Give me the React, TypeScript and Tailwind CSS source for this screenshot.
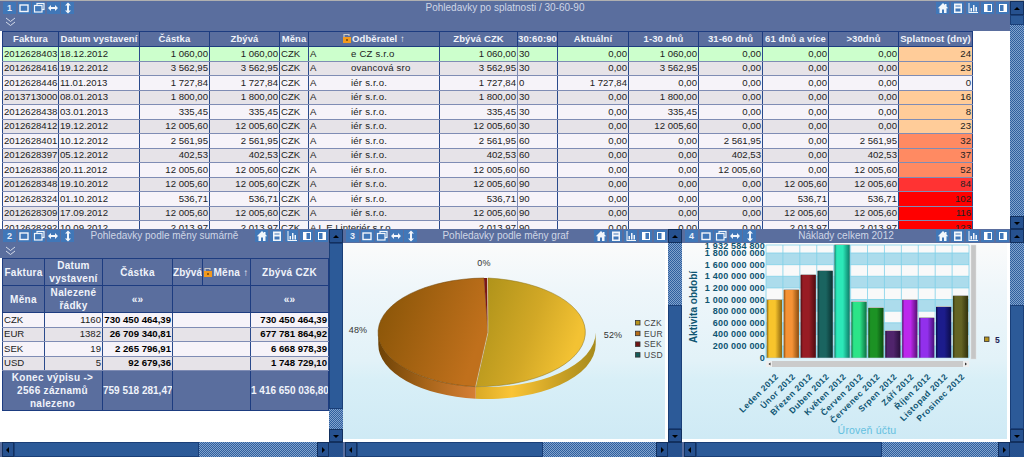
import React from "react";

const SANS = "font-['Liberation_Sans',Arial,sans-serif]";

function Glyph({ k }: { k: string }) {
  const s = "#f2f6fb";
  const b = "#4077b8";
  switch (k) {
    case "win":
      return <rect x="2" y="3" width="8" height="6.5" fill={b} stroke={s} strokeWidth="1.4" />;
    case "dbl":
      return (
        <g stroke={s} strokeWidth="1.2" fill={b}>
          <rect x="4" y="1.5" width="7" height="6" />
          <rect x="1.5" y="3.5" width="7.5" height="6.5" />
        </g>
      );
    case "lr":
      return <path d="M1 6l3-3v2h4V3l3 3-3 3V7H4v2z" fill={s} />;
    case "ud":
      return <path d="M6 .5l3 3H7v5h2l-3 3-3-3h2v-5H3z" fill={s} />;
    case "home":
      return <path d="M6 1L.8 6.2h1.7V11H5V7.6h2V11h2.5V6.2h1.7L9.5 4.5V2H8v1z" fill={s} />;
    case "save":
      return (
        <g fill={s}>
          <path d="M2 1.5h8v9.5H2z" />
          <path d="M3.5 3.5h5v1h-5zM3.5 6.5h5v3h-5z" fill={b} />
        </g>
      );
    case "chart":
      return <path d="M1.5 1v10h9.5v-1H2.5V1zM3.5 6h1.5v3.5H3.5zM6 3h1.5v6.5H6zM8.5 5H10v4.5H8.5z" fill={s} />;
    case "boxl":
      return (
        <g>
          <rect x="2" y="2" width="8" height="8" fill="#fff" />
          <rect x="5.5" y="3" width="3.5" height="6" fill={b} />
        </g>
      );
    case "boxr":
      return (
        <g>
          <rect x="2" y="2" width="8" height="8" fill="#fff" />
          <rect x="3" y="3" width="3.5" height="6" fill={b} />
        </g>
      );
    default:
      return null;
  }
}

function Tile({ k }: { k: string }) {
  return (
    <div className="w-[13px] h-[12px] bg-[#4077b8] flex items-center justify-center shrink-0">
      {k.length === 1 ? (
        <span className={`${SANS} text-[9px] leading-none font-bold text-[#e8eef8]`}>{k}</span>
      ) : (
        <svg width="12" height="12" viewBox="0 0 12 12">
          <Glyph k={k} />
        </svg>
      )}
    </div>
  );
}

function TitleBar({ n, title }: { n: string; title: string }) {
  return (
    <div className="h-[14px] flex items-center pl-[3px] pr-[1px] shrink-0">
      <div className="flex gap-[1.5px]">
        {[n, "win", "dbl", "lr", "ud"].map((k) => (
          <Tile key={k} k={k} />
        ))}
      </div>
      <div className={`${SANS} flex-1 text-center text-[10px] leading-none text-[#cfd6e6] whitespace-nowrap`}>{title}</div>
      <div className="flex gap-[2px]">
        {["home", "save", "chart", "boxl", "boxr"].map((k) => (
          <Tile key={k} k={k} />
        ))}
      </div>
    </div>
  );
}

function Chevrons() {
  return (
    <div className="h-[15px] flex items-center pl-[5px] shrink-0">
      <svg width="11" height="10" viewBox="0 0 11 10" fill="none" stroke="#d5dcea" strokeWidth="1">
        <path d="M1 1l4.5 3.5L10 1M1 5l4.5 3.5L10 5" />
      </svg>
    </div>
  );
}

const DITHER = "bg-[repeating-conic-gradient(#2f5f9e_0_25%,#82a2cc_0_50%)] bg-[length:2px_2px]";

function ArrowBtn({ dir, className }: { dir: "u" | "d" | "l" | "r"; className: string }) {
  const p = { u: "M2 7l3-3 3 3z", d: "M2 4l3 3 3-3z", l: "M6 2L3 5l3 3z", r: "M4 2l3 3-3 3z" }[dir];
  return (
    <div className={`bg-[#26518f] border border-[#12305f] flex items-center justify-center shrink-0 ${className}`}>
      <svg width="10" height="10" viewBox="0 0 10 10">
        <path d={p} fill="#000" />
      </svg>
    </div>
  );
}

function VScroll({ before, thumb }: { before: number; thumb: number }) {
  return (
    <div className="w-[14px] shrink-0 flex flex-col self-stretch">
      <ArrowBtn dir="u" className="h-[14px] w-[14px]" />
      <div className={`flex-1 flex flex-col ${DITHER}`}>
        <div className="shrink-0" style={{ height: before }} />
        <div className="bg-[#2c5a98] border border-[#1a3f78] shrink-0" style={{ height: thumb }} />
      </div>
      <ArrowBtn dir="d" className="h-[13px] w-[14px]" />
    </div>
  );
}

function HScroll({ thumb }: { thumb: number }) {
  return (
    <div className="h-[15px] shrink-0 flex bg-[#5a6e9e] pl-[2px]">
      <ArrowBtn dir="l" className="w-[12px] h-[15px]" />
      <div className={`flex-1 flex ${DITHER}`}>
        <div className="bg-[#2c5a98] border border-[#1a3f78] shrink-0" style={{ width: thumb }} />
      </div>
      <ArrowBtn dir="r" className="w-[12px] h-[15px]" />
    </div>
  );
}

function Lock() {
  return (
    <svg width="8" height="10" viewBox="0 0 8 10" className="inline-block align-[-1px] mr-[1px]">
      <path d="M1 4V1.5h5V3" fill="none" stroke="#c9c9c9" strokeWidth="1.2" />
      <rect x="0" y="4" width="8" height="6" fill="#f39a1e" />
      <rect x="3.2" y="6" width="1.6" height="2" fill="#7a4a08" />
    </svg>
  );
}

const topCols = [56, 81, 70, 70, 29, 131, 78, 40, 71, 70, 64, 66, 70, 74];
const topHead = ["Faktura", "Datum vystavení", "Částka", "Zbývá", "Měna", "Odběratel ↑", "Zbývá CZK", "30:60:90", "Aktuální", "1-30 dnů", "31-60 dnů", "61 dnů a více", ">30dnů", "Splatnost (dny)"];

type R = [string, string, string, string, string, string, string, string, string, string, number, string];
const Z = "0,00";
const rows: R[] = [
  ["2012628403", "18.12.2012", "1 060,00", "e CZ s.r.o", "30", Z, "1 060,00", Z, Z, Z, 24, "bg-[#ffcc99]"],
  ["2012628416", "19.12.2012", "3 562,95", "ovancová sro", "30", Z, "3 562,95", Z, Z, Z, 23, "bg-[#ffcc99]"],
  ["2012628446", "11.01.2013", "1 727,84", "iér s.r.o.", "0", "1 727,84", Z, Z, Z, Z, 0, ""],
  ["2013713000", "08.01.2013", "1 800,00", "iér s.r.o.", "30", Z, "1 800,00", Z, Z, Z, 16, "bg-[#ffcc99]"],
  ["2012628438", "03.01.2013", "335,45", "iér s.r.o.", "30", Z, "335,45", Z, Z, Z, 8, "bg-[#ffcc99]"],
  ["2012628412", "19.12.2012", "12 005,60", "iér s.r.o.", "30", Z, "12 005,60", Z, Z, Z, 23, "bg-[#ffcc99]"],
  ["2012628401", "10.12.2012", "2 561,95", "iér s.r.o.", "60", Z, Z, "2 561,95", Z, "2 561,95", 32, "bg-[#ff8a62]"],
  ["2012628397", "05.12.2012", "402,53", "iér s.r.o.", "60", Z, Z, "402,53", Z, "402,53", 37, "bg-[#ff8a62]"],
  ["2012628386", "20.11.2012", "12 005,60", "iér s.r.o.", "60", Z, Z, "12 005,60", Z, "12 005,60", 52, "bg-[#ff8a62]"],
  ["2012628348", "19.10.2012", "12 005,60", "iér s.r.o.", "90", Z, Z, Z, "12 005,60", "12 005,60", 84, "bg-[#ff3333]"],
  ["2012628324", "01.10.2012", "536,71", "iér s.r.o.", "90", Z, Z, Z, "536,71", "536,71", 102, "bg-[#ff0000]"],
  ["2012628309", "17.09.2012", "12 005,60", "iér s.r.o.", "90", Z, Z, Z, "12 005,60", "12 005,60", 116, "bg-[#ff0000]"],
  ["2012628292", "10.09.2012", "2 013,97", "", "90", Z, Z, "0,00", "2 013,97", "2 013,97", 123, "bg-[#ff0000]"],
];

const TD = "border border-[#2a4a8c] border-y-[#7f8cb4] px-[1px] p-0 text-[9.6px] leading-[12px] text-[#222] whitespace-nowrap overflow-hidden";
const TH = "border border-[#1d3c80] px-0 p-0 text-[9.5px] font-bold tracking-[0.1px] leading-[12px] text-[#f0f3fa] bg-[#5a6e9e] text-center whitespace-nowrap overflow-hidden";

function TopTable() {
  return (
    <table className={`${SANS} table-fixed border-collapse w-[970px]`}>
      <colgroup>
        {topCols.map((w, i) => (
          <col key={i} style={{ width: w }} />
        ))}
      </colgroup>
      <thead>
        <tr className="h-[15px]">
          {topHead.map((h, i) => (
            <th key={i} className={TH}>
              {i === 5 && <Lock />}
              {h}
            </th>
          ))}
        </tr>
      </thead>
      <tbody>
        {rows.map((r, i) => {
          const bg = i === 0 ? "bg-[#ccffcc]" : i % 2 === 1 ? "bg-[#e6e3e8]" : "bg-[#f6f3f9]";
          return (
            <tr key={i} className={`h-[14.5px] ${bg}`}>
              <td className={TD}>{r[0]}</td>
              <td className={TD}>{r[1]}</td>
              <td className={`${TD} text-right`}>{r[2]}</td>
              <td className={`${TD} text-right`}>{r[2]}</td>
              <td className={TD}>CZK</td>
              <td className={TD}>
                {r[3] ? (
                  <div className="flex">
                    <span className="w-[41px]">A</span>
                    <span className="tracking-[0.2px]">{r[3]}</span>
                  </div>
                ) : (
                  "A L E I interiér s.r.o."
                )}
              </td>
              <td className={`${TD} text-right border-x-[#7f8cb4]`}>{r[2]}</td>
              <td className={TD}>{r[4]}</td>
              {[5, 6, 7, 8, 9].map((k) => (
                <td key={k} className={`${TD} text-right`}>
                  {r[k] as string}
                </td>
              ))}
              <td className={`${TD} text-right ${r[11]}`}>{r[10]}</td>
            </tr>
          );
        })}
      </tbody>
    </table>
  );
}

const curRows = [
  ["CZK", "1160", "730 450 464,39", "730 450 464,39"],
  ["EUR", "1382", "26 709 340,81", "677 781 864,92"],
  ["SEK", "19", "2 265 796,91", "6 668 978,39"],
  ["USD", "5", "92 679,36", "1 748 729,10"],
];

function CurTable() {
  const th = "border border-[#1d3c80] p-0 text-[10px] font-bold tracking-[0.3px] leading-[13px] text-[#f0f3fa] bg-[#5a6e9e] text-center overflow-hidden";
  const td = "border border-[#2a4a8c] border-y-[#7f8cb4] px-[1px] p-0 text-[9.6px] leading-[12px] text-[#222] whitespace-nowrap overflow-hidden";
  return (
    <table className={`${SANS} table-fixed border-collapse w-[326px]`}>
      <colgroup>
        {[42, 58, 70, 30, 48, 78].map((w, i) => (
          <col key={i} style={{ width: w }} />
        ))}
      </colgroup>
      <tbody>
        <tr className="h-[27px]">
          <th className={th}>Faktura</th>
          <th className={th}>
            Datum
            <br />
            vystavení
          </th>
          <th className={th}>Částka</th>
          <th className={`${th} tracking-normal`}>Zbývá</th>
          <th className={`${th} whitespace-nowrap tracking-[0.2px]`}>
            <Lock />
            Měna ↑
          </th>
          <th className={th}>Zbývá CZK</th>
        </tr>
        <tr className="h-[27px]">
          <th className={th}>Měna</th>
          <th className={th}>
            Nalezené
            <br />
            řádky
          </th>
          <th className={th}>«»</th>
          <th className={th} colSpan={2} />
          <th className={th}>«»</th>
        </tr>
        {curRows.map((r, i) => (
          <tr key={r[0]} className={`h-[14.5px] ${i % 2 ? "bg-[#e6e3e8]" : "bg-[#f6f3f9]"}`}>
            <td className={td}>{r[0]}</td>
            <td className={`${td} text-right`}>{r[1]}</td>
            <td className={`${td} text-right font-bold text-black`}>{r[2]}</td>
            <td className={td} colSpan={2} />
            <td className={`${td} text-right font-bold text-black`}>{r[3]}</td>
          </tr>
        ))}
        <tr className="h-[38px]">
          <th className={th} colSpan={2}>
            Konec výpisu -&gt;
            <br />
            2566 záznamů
            <br />
            nalezeno
          </th>
          <th className={`${th} text-[9.6px] tracking-normal whitespace-nowrap text-right pr-[1px]`}>759 518 281,47</th>
          <th className={th} colSpan={2} />
          <th className={`${th} text-[9.6px] tracking-normal whitespace-nowrap text-right pr-[1px]`}>1 416 650 036,80</th>
        </tr>
      </tbody>
    </table>
  );
}

const CHART_BG = "bg-[linear-gradient(to_bottom,#fbfbfb_0%,#eef6fa_25%,#e2f2f8_60%,#d8eff7_70%,#cfeaf5_100%)]";

function PieChart() {
  const t = "font-['Liberation_Sans',Arial,sans-serif]";
  return (
    <svg width="324" height="196" viewBox="0 0 324 196" className={t}>
      <defs>
        <linearGradient id="czk" x1="0" y1="0" x2="1" y2="0.35">
          <stop offset="0" stopColor="#a98f18" />
          <stop offset="0.6" stopColor="#d2a826" />
          <stop offset="1" stopColor="#f3c233" />
        </linearGradient>
        <linearGradient id="eur" x1="0" y1="0" x2="1" y2="0.35">
          <stop offset="0" stopColor="#855306" />
          <stop offset="1" stopColor="#c0701c" />
        </linearGradient>
        <linearGradient id="czkS" gradientUnits="userSpaceOnUse" x1="132" y1="0" x2="254" y2="0">
          <stop offset="0" stopColor="#d9a925" />
          <stop offset="0.3" stopColor="#fac436" />
          <stop offset="0.7" stopColor="#c9a024" />
          <stop offset="1" stopColor="#a68a1c" />
        </linearGradient>
        <linearGradient id="eurS" gradientUnits="userSpaceOnUse" x1="35" y1="0" x2="133" y2="0">
          <stop offset="0" stopColor="#6d4206" />
          <stop offset="0.5" stopColor="#a8651a" />
          <stop offset="1" stopColor="#d67f36" />
        </linearGradient>
      </defs>
      <path d="M252.7 89.5A108.7 54.5 0 0 1 132.7 143.7v12A108.7 54.5 0 0 0 252.7 101.5z" fill="url(#czkS)" />
      <path d="M132.7 143.7A108.7 54.5 0 0 1 35.3 89.5v12A108.7 54.5 0 0 0 132.7 155.7z" fill="url(#eurS)" />
      <path d="M145 35A108.7 54.5 0 0 1 132.7 143.7L145 89.5z" fill="url(#czk)" stroke="#8a7014" strokeWidth="0.5" />
      <path d="M132.7 143.7A108.7 54.5 0 0 1 141 35L145 89.5z" fill="url(#eur)" stroke="#6d4206" strokeWidth="0.5" />
      <path d="M141 35h3.5L145 89.5z" fill="#7a1616" />
      <path d="M132.7 143.7L145 89.5 144.5 35" fill="none" stroke="#eee8c8" strokeWidth="0.7" />
      <g fontSize="9" fill="#333" textAnchor="middle" letterSpacing="0.2">
        <text x="141" y="23">0%</text>
        <text x="15" y="90">48%</text>
        <text x="270" y="95">52%</text>
      </g>
      {[
        ["CZK", "#b8941c"],
        ["EUR", "#b56c16"],
        ["SEK", "#701414"],
        ["USD", "#145a58"],
      ].map(([l, c], i) => (
        <g key={l}>
          <rect x="292.5" y={77.5 + i * 10.7} width="4.5" height="4.5" fill={c} stroke="#333" strokeWidth="0.8" />
          <text x="301" y={83 + i * 10.7} fontSize="8.5" fill="#444" letterSpacing="0.3">
            {l}
          </text>
        </g>
      ))}
    </svg>
  );
}

const months = ["Leden 2012", "Únor 2012", "Březen 2012", "Duben 2012", "Květen 2012", "Červen 2012", "Červenec 2012", "Srpen 2012", "Září 2012", "Říjen 2012", "Listopad 2012", "Prosinec 2012"];
const barTops = [57, 47, 32, 28, 2, 59, 65, 88, 57, 75, 64, 53];
const barCols = [
  ["#f8c42c", "#8a6410"],
  ["#f59336", "#8a4c10"],
  ["#981c24", "#4c0c10"],
  ["#1a6460", "#0a3030"],
  ["#2ce8b8", "#0c7c68"],
  ["#2ce488", "#0c7044"],
  ["#1c9224", "#0a4c10"],
  ["#50246c", "#28103c"],
  ["#bc28ec", "#581074"],
  ["#9230ec", "#481078"],
  ["#1c1c8c", "#0c0c48"],
  ["#646424", "#30300c"],
];
const yTicks = ["1 800 000 000", "1 600 000 000", "1 400 000 000", "1 200 000 000", "1 000 000 000", "800 000 000", "600 000 000", "400 000 000", "200 000 000", "0"];

function BarChart() {
  const top = 3;
  const y0 = 114.7;
  const step = 11.63;
  const bw = 16.92;
  return (
    <svg width="326" height="196" viewBox="0 0 326 196" className="font-['Liberation_Sans',Arial,sans-serif]">
      <defs>
        {barCols.map(([a, b], i) => (
          <linearGradient key={i} id={`b${i}`} x1="0" y1="0" x2="1" y2="0">
            <stop offset="0" stopColor={b} />
            <stop offset="0.15" stopColor={a} />
            <stop offset="0.55" stopColor={a} />
            <stop offset="1" stopColor={b} />
          </linearGradient>
        ))}
      </defs>
      <rect x="84" y={top} width="203" height={y0 - top} fill="#f9f9f9" />
      {yTicks.slice(0, 9).map((_, i) =>
        i % 2 === 0 ? <rect key={i} x="84" y={y0 - (9 - i) * step} width="203" height={step} fill="#acdcec" /> : null,
      )}
      {yTicks.map((_, i) => (
        <line key={i} x1="84" x2="287" y1={y0 - (9 - i) * step} y2={y0 - (9 - i) * step} stroke="#7fd0e8" strokeWidth="0.8" />
      ))}
      {Array.from({ length: 13 }).map((_, i) => (
        <line key={i} x1={84 + i * bw} x2={84 + i * bw} y1={top - 1} y2={y0} stroke="#7fd0e8" strokeWidth="0.8" />
      ))}
      <line x1="84" x2="287" y1={top - 1} y2={top - 1} stroke="#7fd0e8" strokeWidth="0.8" />
      {barTops.map((t, i) => (
        <g key={i}>
          <rect x={84.8 + i * bw} y={t - 1} width={15.2} height={y0 - t + 1} fill="#bbb" />
          <rect x={84.8 + i * bw} y={t} width={15.2} height={y0 - t} fill={`url(#b${i})`} />
        </g>
      ))}
      <g fontSize="9" fontWeight="bold" fill="#0f5572" textAnchor="end" letterSpacing="0.2">
        <text x="83" y="6">1 932 584 800</text>
        {yTicks.map((l, i) => (
          <text key={l} x="83" y={y0 + 3 - (9 - i) * step}>
            {l}
          </text>
        ))}
      </g>
      <rect x="289" y="2" width="5" height="114" fill="#c6c6c6" stroke="#ddd" strokeWidth="0.5" />
      <rect x="84" y="118" width="203" height="6" fill="#cbcbcb" />
      <rect x="84" y="118" width="6" height="6" fill="#eee" />
      <rect x="281" y="118" width="6" height="6" fill="#eee" />
      <path d="M88.5 119.5v3l-2-1.5zM283 119.5v3l2-1.5z" fill="#333" />
      <text transform="translate(15 64) rotate(-90)" fontSize="10" fontWeight="bold" fill="#0f5572" textAnchor="middle">
        Aktivita období
      </text>
      <g fontSize="8.5" fontWeight="bold" fill="#0f5572" textAnchor="end" letterSpacing="0.5">
        {months.map((m, i) => (
          <text key={m} transform={`translate(${97 + i * bw} 134) rotate(-45)`}>
            {m}
          </text>
        ))}
      </g>
      <text x="185" y="191" fontSize="10.5" fill="#63c0e0" textAnchor="middle" letterSpacing="0.2">
        Úroveň účtu
      </text>
      <rect x="302.5" y="94" width="4.5" height="4.5" fill="#b8941c" stroke="#333" strokeWidth="0.8" />
      <text x="313" y="99.5" fontSize="8.5" fontWeight="bold" fill="#225">
        5
      </text>
    </svg>
  );
}

function ChartPanel({ n, title, w, thumbGap, children }: { n: string; title: string; w: string; thumbGap: number; children: React.ReactNode }) {
  return (
    <div className={`${w} shrink-0 flex bg-[#5a6e9e]`}>
      <div className="flex-1 min-w-0 flex flex-col">
        <TitleBar n={n} title={title} />
        <div className="flex-1 min-h-0 bg-white pr-[3px] pb-[3px] overflow-hidden">
          <div className={`h-full ${CHART_BG}`}>{children}</div>
        </div>
        <HScroll thumb={186} />
      </div>
      <div className="flex flex-col w-[14px] shrink-0">
        <div className="flex-1 min-h-0 flex">
          <VScroll before={thumbGap} thumb={124} />
        </div>
        <div className="h-[15px] bg-[#26518f] border-t border-[#12305f]" />
      </div>
    </div>
  );
}

export default function App() {
  return (
    <div className="w-[1024px] h-[457px] overflow-hidden flex flex-col bg-white">
      <div className="h-[229px] shrink-0 flex bg-[#5a6e9e] border-t border-[#b0b0b0]">
        <div className="flex-1 min-w-0 flex flex-col">
          <TitleBar n="1" title="Pohledavky po splatnosti / 30-60-90" />
          <div className="h-[17px] shrink-0 -mt-px">
            <Chevrons />
          </div>
          <div className="flex-1 min-h-0 bg-white pl-[2px] overflow-hidden">
            <TopTable />
          </div>
        </div>
        <div className="flex">
          <VScroll before={0} thumb={10} />
        </div>
      </div>
      <div className="flex-1 min-h-0 flex">
        <div className="w-[343px] shrink-0 flex bg-[#5a6e9e]">
          <div className="flex-1 min-w-0 flex flex-col">
            <TitleBar n="2" title="Pohledavky podle měny sumárně" />
            <Chevrons />
            <div className="flex-1 min-h-0 bg-white pl-[2px] overflow-hidden">
              <CurTable />
            </div>
            <HScroll thumb={185} />
          </div>
          <div className="flex flex-col w-[14px] shrink-0">
            <div className="flex-1 min-h-0 flex">
              <VScroll before={0} thumb={166} />
            </div>
            <div className="h-[15px] bg-[#26518f] border-t border-[#12305f]" />
          </div>
        </div>
        <ChartPanel n="3" title="Pohledavky podle měny graf" w="w-[339px]" thumbGap={62}>
          <PieChart />
        </ChartPanel>
        <ChartPanel n="4" title="Náklady celkem 2012" w="w-[342px]" thumbGap={62}>
          <BarChart />
        </ChartPanel>
      </div>
    </div>
  );
}
